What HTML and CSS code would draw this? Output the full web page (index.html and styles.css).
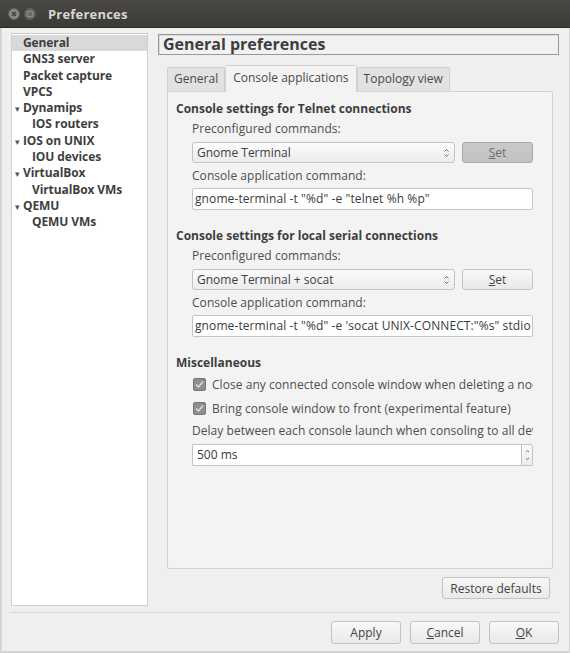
FILE: index.html
```html
<!DOCTYPE html>
<html>
<head>
<meta charset="utf-8">
<link rel="stylesheet" href="styles.css">
</head>
<body>
<div class="window">
  <div class="titlebar">
    <span class="wbtn close"><svg width="12" height="12" viewBox="0 0 12 12"><circle cx="6" cy="6" r="5.5" fill="#8a8985" stroke="#5e5d59" stroke-width="1"/><path d="M4 4 L8 8 M8 4 L4 8" stroke="#3e3d39" stroke-width="1.4"/></svg></span>
    <span class="wbtn"><svg width="12" height="12" viewBox="0 0 12 12"><circle cx="6" cy="6" r="5.5" fill="#6b6a66" stroke="#5a5955" stroke-width="1"/><rect x="3.5" y="3.5" width="5" height="5" fill="none" stroke="#8c8b87" stroke-width="1"/></svg></span>
    <span class="title">Preferences</span>
  </div>
  <div class="main">
    <div class="tree">
      <div class="item sel">General</div>
      <div class="item">GNS3 server</div>
      <div class="item">Packet capture</div>
      <div class="item">VPCS</div>
      <div class="item parent"><span class="tri">▾</span>Dynamips</div>
      <div class="item child">IOS routers</div>
      <div class="item parent"><span class="tri">▾</span>IOS on UNIX</div>
      <div class="item child">IOU devices</div>
      <div class="item parent"><span class="tri">▾</span>VirtualBox</div>
      <div class="item child">VirtualBox VMs</div>
      <div class="item parent"><span class="tri">▾</span>QEMU</div>
      <div class="item child">QEMU VMs</div>
    </div>
    <div class="right">
      <div class="header">General preferences</div>
      <div class="tabs">
        <div class="tab">General</div>
        <div class="tab active">Console applications</div>
        <div class="tab">Topology view</div>
      </div>
      <div class="panel">
        <div class="heading h1">Console settings for Telnet connections</div>
        <div class="indent">
          <div class="label l-pre">Preconfigured commands:</div>
          <div class="row">
            <div class="combo"><span class="ctext">Gnome Terminal</span><svg class="arr" width="7" height="12" viewBox="0 0 7 12"><path d="M1.5 4.5 L3.5 2.5 L5.5 4.5 M1.5 7.5 L3.5 9.5 L5.5 7.5" fill="none" stroke="#6a6a6a" stroke-width="1"/></svg></div>
            <div class="btn set disabled"><u>S</u>et</div>
          </div>
          <div class="label l-cmd">Console application command:</div>
          <div class="input">gnome-terminal -t "%d" -e "telnet %h %p"</div>
        </div>
        <div class="heading h2">Console settings for local serial connections</div>
        <div class="indent">
          <div class="label l-pre">Preconfigured commands:</div>
          <div class="row">
            <div class="combo"><span class="ctext">Gnome Terminal + socat</span><svg class="arr" width="7" height="12" viewBox="0 0 7 12"><path d="M1.5 4.5 L3.5 2.5 L5.5 4.5 M1.5 7.5 L3.5 9.5 L5.5 7.5" fill="none" stroke="#6a6a6a" stroke-width="1"/></svg></div>
            <div class="btn set"><u>S</u>et</div>
          </div>
          <div class="label l-cmd">Console application command:</div>
          <div class="input">gnome-terminal -t "%d" -e 'socat UNIX-CONNECT:"%s" stdio -,raw,echo=0'</div>
        </div>
        <div class="heading h2">Miscellaneous</div>
        <div class="indent">
          <div class="check c1"><svg width="13" height="13" viewBox="0 0 13 13"><rect x="0.5" y="0.5" width="12" height="12" rx="1.5" fill="#8e8e8e" stroke="#777" stroke-width="1"/><path d="M3 6.5 L5.5 9 L10 3.5" fill="none" stroke="#d6d6d6" stroke-width="1.8"/></svg><span>Close any connected console window when deleting a node</span></div>
          <div class="check c2"><svg width="13" height="13" viewBox="0 0 13 13"><rect x="0.5" y="0.5" width="12" height="12" rx="1.5" fill="#8e8e8e" stroke="#777" stroke-width="1"/><path d="M3 6.5 L5.5 9 L10 3.5" fill="none" stroke="#d6d6d6" stroke-width="1.8"/></svg><span>Bring console window to front (experimental feature)</span></div>
          <div class="label l-delay">Delay between each console launch when consoling to all devices</div>
          <div class="spin"><div class="stext">500 ms</div><div class="sarrows"><svg width="7" height="18" viewBox="0 0 7 18"><path d="M2 6 L3.5 4.5 L5 6 M2 12 L3.5 13.5 L5 12" fill="none" stroke="#6a6a6a" stroke-width="1"/></svg></div></div>
        </div>
      </div>
      <div class="restore-row"><div class="btn restore">Restore defaults</div></div>
    </div>
  </div>
  <div class="sep"></div>
  <div class="footer">
    <div class="btn fbtn">Apply</div>
    <div class="btn fbtn"><u>C</u>ancel</div>
    <div class="btn fbtn"><u>O</u>K</div>
  </div>
</div>
</body>
</html>
```
FILE: styles.css
```css
* { box-sizing: border-box; }
html, body { margin: 0; padding: 0; }
body {
  width: 570px; height: 653px; overflow: hidden;
  font-family: "Open Sans", "DejaVu Sans", sans-serif;
  font-size: 12px; color: #4a4a4a;
  background: #ffffff;
}
.window {
  width: 570px; height: 653px;
  background: #efefef;
  border-left: 2px solid #d4d4d4;
  border-right: 1px solid #d4d4d4;
  border-bottom: 2px solid #d4d4d4;
  display: flex; flex-direction: column;
}
.titlebar {
  height: 28px; flex: none;
  margin-left: -2px; margin-right: -1px;
  background: linear-gradient(#4a4945, #3b3a36);
  border-bottom: 1px solid #2c2b28;
  display: flex; align-items: center;
  padding-left: 8px;
}
.wbtn { width: 12px; height: 12px; display: flex; margin-right: 4px; }
.title {
  margin-left: 8px;
  color: #d8d6d0; font-weight: bold; font-size: 13px;
  letter-spacing: 0.2px;
}
.main {
  display: flex; gap: 10px;
  padding: 5px 9px 0 9px;
  height: 578px; flex: none;
}
.tree {
  width: 137px; height: 573px; flex: none;
  background: #ffffff;
  border: 1px solid #cfcfcf;
  padding-top: 1px;
}
.item {
  height: 16.3px; line-height: 16px;
  font-weight: bold; font-size: 12px; color: #3e3e3e;
  padding-left: 11px; white-space: nowrap;
  letter-spacing: -0.1px;
}
.item.sel { background: #d9d9d9; }
.item.parent { padding-left: 3px; }
.tri { display: inline-block; width: 8px; font-size: 9px; color: #555; }
.item.child { padding-left: 20px; }
.right { width: 401px; flex: none; display: flex; flex-direction: column; }
.header {
  height: 21px; margin-top: 1px;
  border: 1px solid #9a9a9a;
  background: #f1f1f1;
  box-shadow: inset 1px 1px 0 #d8d8d8;
  font-weight: bold; font-size: 16px; color: #3e3e3e;
  line-height: 18px; padding-left: 4px;
}
.tabs {
  display: flex; margin-top: 10px; margin-left: 9px;
  height: 26px; align-items: flex-end;
  position: relative; z-index: 1;
}
.tab {
  height: 24px; line-height: 22px;
  padding: 0 6px;
  background: #e2e2e2;
  border: 1px solid #cfcfcf; border-bottom: none;
  border-radius: 2px 2px 0 0;
  color: #4a4a4a; white-space: nowrap;
}
.tab.active {
  height: 27px; background: #f3f3f3;
  border-color: #d2d2d2;
  margin-bottom: -1px;
  line-height: 24px; padding: 0 7px;
}
.panel {
  margin-left: 9px; margin-right: 6px;
  height: 478px;
  background: #f3f3f3;
  border: 1px solid #d2d2d2;
  border-radius: 0 2px 2px 2px;
  padding: 9px 19px 0 8px;
}
.heading { font-weight: bold; color: #3e3e3e; line-height: 16px; white-space: nowrap; }
.h2 { margin-top: 18px; }
.indent { padding-left: 16px; }
.label { line-height: 16px; white-space: nowrap; overflow: hidden; color: #4e4e4e; letter-spacing: 0.05px; }
.l-pre { margin-top: 4px; }
.l-cmd { margin-top: 5px; }
.row { display: flex; margin-top: 5px; gap: 7px; height: 21px; }
.combo {
  width: 263px; height: 21px;
  border: 1px solid #c4c4c4; border-radius: 3px;
  background: linear-gradient(#fbfbfb, #ececec);
  display: flex; align-items: center; justify-content: space-between;
  padding-left: 4px; padding-right: 4px;
  color: #404040;
}
.arr { flex: none; }
.btn {
  border: 1px solid #c3c3c3; border-radius: 3px;
  background: linear-gradient(#f8f8f8, #e9e9e9);
  text-align: center; color: #444;
  display: flex; align-items: center; justify-content: center;
}
.btn u { text-decoration: underline; text-underline-offset: 1px; }
.set { width: 71px; height: 21px; }
.set.disabled {
  background: linear-gradient(#c9c9c9, #c2c2c2);
  border-color: #a9a9a9; color: #6e6e6e;
}
.input {
  margin-top: 4px; height: 22px;
  background: #ffffff;
  border: 1px solid #c4c4c4; border-radius: 2px;
  line-height: 20px; padding-left: 2px;
  white-space: nowrap; overflow: hidden; color: #3a3a3a;
  letter-spacing: 0.1px;
}
.check {
  display: flex; align-items: center; gap: 6px;
  height: 16px; white-space: nowrap; overflow: hidden;
  padding-left: 1px; color: #4e4e4e; letter-spacing: 0.05px;
}
.check svg { flex: none; }
.c1 { margin-top: 5px; }
.c2 { margin-top: 8px; }
.l-delay { margin-top: 7px; }
.spin {
  margin-top: 5px; height: 22px; display: flex;
}
.stext {
  flex: 1; background: #ffffff;
  border: 1px solid #c4c4c4; border-right: none; border-radius: 2px 0 0 2px;
  line-height: 20px; padding-left: 4px; color: #3a3a3a;
}
.sarrows {
  width: 12px; display: flex; align-items: center; justify-content: center;
  border: 1px solid #c4c4c4; border-radius: 0 2px 2px 0;
  background: linear-gradient(#fafafa, #ececec);
}
.restore-row { display: flex; justify-content: flex-end; margin-top: 8px; padding-right: 9px; }
.restore { width: 108px; height: 22px; }
.sep {
  margin: 6px 9px 0 9px; height: 0;
  border-top: 1px dotted #c4c4c4;
}
.footer {
  display: flex; justify-content: flex-end; gap: 9px;
  padding-right: 10px; margin-top: 8px;
}
.fbtn { width: 70px; height: 23px; }
```
